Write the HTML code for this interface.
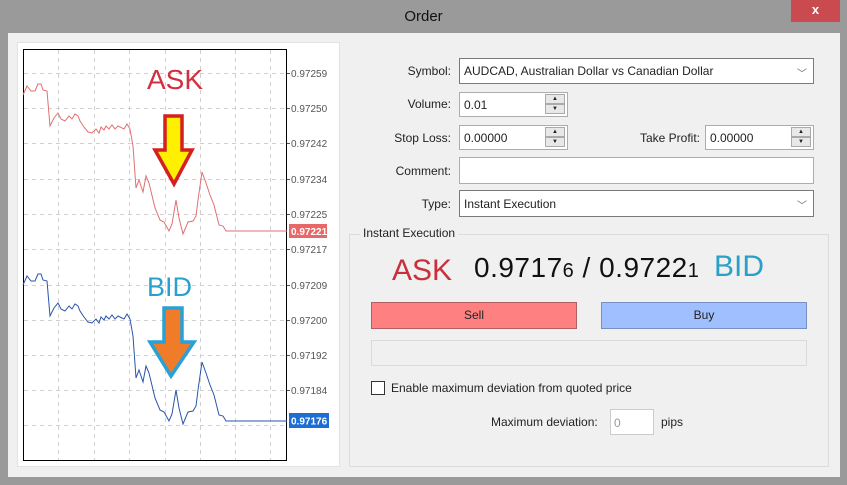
<!DOCTYPE html>
<html><head><meta charset="utf-8"><style>
*{margin:0;padding:0;box-sizing:border-box}
body{width:847px;height:485px;background:#9a9a9a;position:relative;overflow:hidden;font-family:"Liberation Sans",sans-serif;font-size:12px;color:#222}
.a{position:absolute}
.title{left:0;top:0;width:847px;height:33px;text-align:center;line-height:34px;font-size:15px;color:#111}
.close{left:791px;top:0;width:49px;height:22px;background:#c94a4f;color:#fff;text-align:center;line-height:20px;font-size:13px;font-weight:bold}
.client{left:8px;top:33px;width:832px;height:444px;background:#f0f0f0}
.box{background:#fff;border:1px solid #adadad}
.lbl{text-align:right;width:120px;line-height:16px}
.sb{position:absolute;left:0;width:20px;height:10px;background:#e8e8e8;border:1px solid #aaa;font-size:6px;text-align:center;line-height:8px}
.chev{right:6px;top:6px;font-size:10px;color:#666}
</style></head><body>
<div class="a title">Order</div>
<div class="a close">x</div>
<div class="a client"></div>
<div class="a" style="left:17px;top:42px;width:323px;height:425px;background:#fff;border:1px solid #e2e2e2"></div>
<svg class="a" style="left:0;top:0" width="847" height="485">
<g stroke="#d0d0d0" stroke-dasharray="4,4" stroke-width="1">
<line x1="58.5" y1="50" x2="58.5" y2="460"/><line x1="94.5" y1="50" x2="94.5" y2="460"/><line x1="129.5" y1="50" x2="129.5" y2="460"/><line x1="165.5" y1="50" x2="165.5" y2="460"/><line x1="200.5" y1="50" x2="200.5" y2="460"/><line x1="235.5" y1="50" x2="235.5" y2="460"/><line x1="270.5" y1="50" x2="270.5" y2="460"/>
<line x1="24" y1="73.5" x2="287" y2="73.5"/><line x1="24" y1="108.5" x2="287" y2="108.5"/><line x1="24" y1="143.5" x2="287" y2="143.5"/><line x1="24" y1="179.5" x2="287" y2="179.5"/><line x1="24" y1="214.5" x2="287" y2="214.5"/><line x1="24" y1="249.5" x2="287" y2="249.5"/><line x1="24" y1="285.5" x2="287" y2="285.5"/><line x1="24" y1="320.5" x2="287" y2="320.5"/><line x1="24" y1="355.5" x2="287" y2="355.5"/><line x1="24" y1="390.5" x2="287" y2="390.5"/><line x1="24" y1="425.5" x2="287" y2="425.5"/>
</g>
<rect x="23.5" y="49.5" width="263" height="411" fill="none" stroke="#000"/>
<polyline fill="none" stroke="#e07070" stroke-width="1" points="23,95 27,86 31,91 35,91 38,84 41,84 43,90 47,91 50,126 54,118 58,113 61,119 65,121 69,116 72,119 75,114 78,116 80,121 84,127 88,132 92,133 96,129 99,133 101,127 104,130 106,126 109,129 112,125 115,129 118,126 124,129 127,124 130,129 133,146 136,188 139,180 143,192 146,176 149,183 155,208 160,220 164,222 169,231 172,224 176,200 179,218 183,234 188,222 193,221 196,216 198,200 202,172 206,183 210,195 214,205 219,225 223,226 226,231 287,231"/>
<polyline fill="none" stroke="#2a55a8" stroke-width="1" transform="translate(0,190)" points="23,95 27,86 31,91 35,91 38,84 41,84 43,90 47,91 50,126 54,118 58,113 61,119 65,121 69,116 72,119 75,114 78,116 80,121 84,127 88,132 92,133 96,129 99,133 101,127 104,130 106,126 109,129 112,125 115,129 118,126 124,129 127,124 130,129 133,146 136,188 139,180 143,192 146,176 149,183 155,208 160,220 164,222 169,231 172,224 176,200 179,218 183,234 188,222 193,221 196,216 198,200 202,172 206,183 210,195 214,205 219,225 223,226 226,231 287,231"/>
<polygon points="165,116 182,116 182,150 192,150 174,184 155,150 165,150" fill="#ffef00" stroke="#d42020" stroke-width="3.5"/>
<polygon points="164,308 182,308 182,342 194,342 171,376 150,342 164,342" fill="#f07c2a" stroke="#2aa0d8" stroke-width="3.5"/>
<text x="147" y="89" font-size="28" fill="#d03040" font-family="Liberation Sans">ASK</text>
<text x="147" y="296" font-size="27" fill="#2aa0d0" font-family="Liberation Sans">BID</text>
<g font-size="10" fill="#555" font-family="Liberation Sans">
<text x="291" y="77">0.97259</text><text x="291" y="112">0.97250</text><text x="291" y="147">0.97242</text><text x="291" y="183">0.97234</text><text x="291" y="218">0.97225</text><text x="291" y="253">0.97217</text><text x="291" y="289">0.97209</text><text x="291" y="324">0.97200</text><text x="291" y="359">0.97192</text><text x="291" y="394">0.97184</text>
</g>
<g stroke="#555"><line x1="287" y1="73.5" x2="290" y2="73.5"/><line x1="287" y1="108.5" x2="290" y2="108.5"/><line x1="287" y1="143.5" x2="290" y2="143.5"/><line x1="287" y1="179.5" x2="290" y2="179.5"/><line x1="287" y1="214.5" x2="290" y2="214.5"/><line x1="287" y1="249.5" x2="290" y2="249.5"/><line x1="287" y1="285.5" x2="290" y2="285.5"/><line x1="287" y1="320.5" x2="290" y2="320.5"/><line x1="287" y1="355.5" x2="290" y2="355.5"/><line x1="287" y1="390.5" x2="290" y2="390.5"/></g>
<rect x="289" y="224" width="38" height="14" fill="#e86868"/>
<text x="291" y="235" font-size="10" fill="#fff" font-weight="bold" font-family="Liberation Sans">0.97221</text>
<rect x="289" y="413" width="40" height="15" fill="#1c6ed4"/>
<text x="291" y="424.5" font-size="10" fill="#fff" font-weight="bold" font-family="Liberation Sans">0.97176</text>
</svg>

<div class="a lbl" style="left:331px;top:63px">Symbol:</div>
<div class="a box" style="left:459px;top:58px;width:355px;height:26px;border-color:#7a7a7a;padding:5px 4px">AUDCAD, Australian Dollar vs Canadian Dollar<span class="a chev">﹀</span></div>
<div class="a lbl" style="left:331px;top:96px">Volume:</div>
<div class="a box" style="left:459px;top:92px;width:109px;height:25px;padding:5px 4px">0.01<div class="a" style="left:85px;top:1px;width:21px;height:21px"><div class="sb" style="top:0">▲</div><div class="sb" style="top:10px">▼</div></div></div>
<div class="a lbl" style="left:331px;top:130px">Stop Loss:</div>
<div class="a box" style="left:459px;top:125px;width:109px;height:25px;padding:5px 4px">0.00000<div class="a" style="left:85px;top:1px;width:21px;height:21px"><div class="sb" style="top:0">▲</div><div class="sb" style="top:10px">▼</div></div></div>
<div class="a lbl" style="left:580px;top:130px">Take Profit:</div>
<div class="a box" style="left:705px;top:125px;width:109px;height:25px;padding:5px 4px">0.00000<div class="a" style="left:85px;top:1px;width:21px;height:21px"><div class="sb" style="top:0">▲</div><div class="sb" style="top:10px">▼</div></div></div>
<div class="a lbl" style="left:331px;top:163px">Comment:</div>
<div class="a box" style="left:459px;top:157px;width:355px;height:27px"></div>
<div class="a lbl" style="left:331px;top:196px">Type:</div>
<div class="a box" style="left:459px;top:190px;width:355px;height:27px;border-color:#7a7a7a;padding:6px 4px">Instant Execution<span class="a chev">﹀</span></div>

<div class="a" style="left:349px;top:234px;width:480px;height:233px;border:1px solid #dcdcdc"></div>
<div class="a" style="left:360px;top:226px;padding:0 3px;background:#f0f0f0;line-height:14px">Instant Execution</div>
<div class="a" style="left:392px;top:254px;font-size:30px;color:#c8303c">ASK</div>
<div class="a" style="left:474px;top:252px;font-size:28px;color:#111;letter-spacing:0.5px;white-space:nowrap">0.9717<span style="font-size:20px">6</span> / 0.9722<span style="font-size:20px">1</span></div>
<div class="a" style="left:714px;top:250px;font-size:30px;color:#2aa0c8">BID</div>
<div class="a" style="left:371px;top:302px;width:206px;height:27px;background:#ff8080;border:1px solid #b06060;text-align:center;line-height:25px">Sell</div>
<div class="a" style="left:601px;top:302px;width:206px;height:27px;background:#a0bfff;border:1px solid #7890c0;text-align:center;line-height:25px">Buy</div>
<div class="a" style="left:371px;top:340px;width:436px;height:26px;border:1px solid #dadada"></div>
<div class="a" style="left:371px;top:381px;width:14px;height:14px;background:#fff;border:1px solid #333"></div>
<div class="a" style="left:391px;top:381px">Enable maximum deviation from quoted price</div>
<div class="a" style="left:491px;top:415px">Maximum deviation:</div>
<div class="a box" style="left:610px;top:409px;width:44px;height:26px;padding:6px 3px;color:#999;border-color:#ccc">0</div>
<div class="a" style="left:661px;top:415px">pips</div>
</body></html>
